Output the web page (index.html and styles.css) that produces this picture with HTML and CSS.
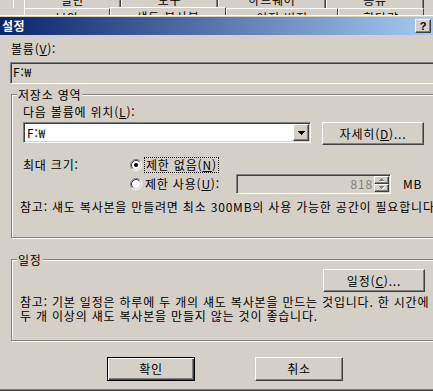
FILE: index.html
```html
<!DOCTYPE html>
<html lang="ko">
<head>
    <meta charset="UTF-8">
    <title>설정</title>
    <link rel="stylesheet" href="styles.css">
</head>
<body>
    <!-- 뒤에 있는 속성 창의 탭 -->
    <div class="backdrop">
        <div class="tabs-top">
            <div class="edge"></div>
            <div class="tab w97"><span>일반</span></div>
            <div class="tab w97"><span>도구</span></div>
            <div class="tab w108"><span>하드웨어</span></div>
            <div class="tab w98"><span>공유</span></div>
        </div>
        <div class="tabs-bottom">
            <div class="tab w86">보안</div>
            <div class="tab w116 active">섀도 복사본</div>
            <div class="tab w112">이전 버전</div>
            <div class="tab w86">할당량</div>
        </div>
    </div>

    <div class="dialog">
        <div class="titlebar">
            <span class="title">설정</span>
            <span class="help raised">?</span>
        </div>

        <div class="client">
            <div class="caption first">볼륨(<u>V</u>):</div>
            <div class="edit sunken volume">F:₩</div>

            <div class="group storage">
                <div class="group-title">저장소 영역</div>
                <div class="caption">다음 볼륨에 위치(<u>L</u>):</div>
                <div class="combo-row">
                    <div class="combo sunken">
                        <span class="combo-text">F:₩</span>
                        <span class="combo-btn raised">
                            <svg width="7" height="4" viewBox="0 0 7 4"><path d="M0 0h7v1h-1v1h-1v1h-1v1h-1v-1h-1v-1h-1v-1H0z" fill="#000"/></svg>
                        </span>
                    </div>
                    <div class="btn raised wide">자세히(<u>D</u>)...</div>
                </div>

                <div class="limit-row first">
                    <div class="limit-label">최대 크기:</div>
                    <div class="radio">
                        <svg width="12" height="12" viewBox="0 0 12 12">
                            <circle cx="6" cy="6" r="4" fill="#fff"/>
                            <path d="M2.11 9.89A5.5 5.5 0 0 1 9.89 2.11" fill="none" stroke="#808080"/>
                            <path d="M9.89 2.11A5.5 5.5 0 0 1 2.11 9.89" fill="none" stroke="#fff"/>
                            <path d="M2.82 9.18A4.5 4.5 0 0 1 9.18 2.82" fill="none" stroke="#404040"/>
                            <path d="M9.18 2.82A4.5 4.5 0 0 1 2.82 9.18" fill="none" stroke="#d4d0c8"/>
                            <circle cx="6" cy="6" r="2" fill="#000"/>
                        </svg>
                        <span class="focus">제한 없음(<u>N</u>)</span>
                    </div>
                </div>
                <div class="limit-row second">
                    <div class="radio">
                        <svg width="12" height="12" viewBox="0 0 12 12">
                            <circle cx="6" cy="6" r="4" fill="#fff"/>
                            <path d="M2.11 9.89A5.5 5.5 0 0 1 9.89 2.11" fill="none" stroke="#808080"/>
                            <path d="M9.89 2.11A5.5 5.5 0 0 1 2.11 9.89" fill="none" stroke="#fff"/>
                            <path d="M2.82 9.18A4.5 4.5 0 0 1 9.18 2.82" fill="none" stroke="#404040"/>
                            <path d="M9.18 2.82A4.5 4.5 0 0 1 2.82 9.18" fill="none" stroke="#d4d0c8"/>
                        </svg>
                        <span>제한 사용(<u>U</u>):</span>
                    </div>
                    <div class="spin-edit sunken">
                        <span class="spin-value">818</span>
                        <span class="spinner">
                            <span class="spin-half raised">
                                <svg width="6" height="4" viewBox="0 0 6 4"><path d="M3 1h1v1h1v1H5v1H1V3h1V2h1z" fill="#fff"/><path d="M2 0h1v1h1v1h1v1H0V2h1V1h1z" fill="#808080"/></svg>
                            </span>
                            <span class="spin-half raised">
                                <svg width="6" height="4" viewBox="0 0 6 4"><path d="M1 1h5v1H5v1H4v1H3V3H2V2H1z" fill="#fff"/><path d="M0 0h5v1H4v1H3v1H2V2H1V1H0z" fill="#808080"/></svg>
                            </span>
                        </span>
                    </div>
                    <div class="unit">MB</div>
                </div>

                <p class="note">참고: 섀도 복사본을 만들려면 최소 300MB의 사용 가능한 공간이 필요합니다.</p>
            </div>

            <div class="group schedule">
                <div class="group-title">일정</div>
                <div class="sched-row">
                    <div class="btn raised wide">일정(<u>C</u>)...</div>
                </div>
                <p class="note">참고: 기본 일정은 하루에 두 개의 섀도 복사본을 만드는 것입니다. 한 시간에<br>두 개 이상의 섀도 복사본을 만들지 않는 것이 좋습니다.</p>
            </div>

            <div class="button-row">
                <div class="btn default">확인</div>
                <div class="btn raised">취소</div>
            </div>
        </div>
    </div>
</body>
</html>
```

FILE: styles.css
```css
* {
    box-sizing: border-box;
}
body {
    margin: 0;
    width: 433px;
    height: 391px;
    overflow: hidden;
    background-color: #d4d0c8;
    font-family: "Noto Sans CJK KR", "Liberation Sans", sans-serif;
    font-size: 12px;
    line-height: 14px;
    letter-spacing: 0.8px;
    color: #000;
}
u {
    text-decoration: underline;
    text-underline-offset: 1px;
}

/* 3D 테두리 */
.raised {
    background-color: #d4d0c8;
    border: 1px solid;
    border-color: #fff #404040 #404040 #fff;
    box-shadow: inset -1px -1px #808080;
}
.sunken {
    border: 1px solid;
    border-color: #808080 #fff #fff #808080;
    box-shadow: inset 1px 1px #404040, inset -1px -1px #d4d0c8;
}

/* 뒤쪽 창 */
.backdrop {
    height: 15px;
    overflow: hidden;
}
.tabs-top {
    display: flex;
    height: 8px;
    padding-left: 13px;
    overflow: hidden;
}
.tabs-top .edge {
    width: 11px;
    border-left: 1px solid #fff;
}
.tabs-top .tab {
    border-left: 1px solid #fff;
    border-right: 1px solid #404040;
    box-shadow: inset -1px 0 #808080;
    text-align: center;
}
.tabs-top .tab span {
    display: block;
    margin-top: -7px;
}
.tabs-bottom {
    display: flex;
    height: 7px;
    padding-left: 24px;
}
.tabs-bottom .tab {
    height: 7px;
    border-top: 1px solid #fff;
    border-left: 1px solid #fff;
    border-right: 1px solid #404040;
    padding-top: 2px;
    text-align: center;
}
.tabs-bottom .tab.active {
    margin-top: -1px;
    height: 9px;
}
.w86 { width: 86px; }
.w97 { width: 97px; }
.w98 { width: 98px; }
.w108 { width: 108px; }
.w112 { width: 112px; }
.w116 { width: 116px; }

/* 대화 상자 */
.dialog {
    border-top: 1px solid #fff;
    padding-top: 1px;
    border-bottom: 1px solid #404040;
}
.titlebar {
    display: flex;
    align-items: center;
    justify-content: space-between;
    height: 18px;
    padding: 0 2px;
    background: linear-gradient(to right, #0a246a, #a6caf0);
}
.title {
    color: #fff;
    font-weight: bold;
    letter-spacing: 0.4px;
}
.help {
    width: 16px;
    height: 14px;
    font-family: "Liberation Sans", sans-serif;
    font-size: 11px;
    font-weight: bold;
    line-height: 12px;
    letter-spacing: 0;
    text-align: center;
}
.client {
    padding: 7px 0 9px 10px;
    box-shadow: inset 0 -1px #808080;
}
.caption.first {
    padding-left: 1px;
}
.volume {
    margin-top: 6px;
    width: 440px;
    height: 22px;
    padding: 2px 2px;
}

.group {
    margin-left: 1px;
    width: 430px;
    border: 1px solid #808080;
    box-shadow: inset 1px 1px #fff, 1px 1px #fff;
    padding: 0 15px 23px 11px;
}
.storage {
    margin-top: 10px;
}
.schedule {
    margin-top: 21px;
    padding-bottom: 17px;
}
.group-title {
    width: fit-content;
    margin: -7px 0 0 -6px;
    padding: 0 1px;
    background-color: #d4d0c8;
}
.storage .caption {
    margin-top: 3px;
}

.combo-row {
    display: flex;
    align-items: flex-start;
    gap: 11px;
    margin-top: 3px;
}
.combo {
    display: flex;
    align-items: center;
    width: 288px;
    height: 21px;
    padding: 1px;
    background-color: #fff;
}
.combo-text {
    padding-left: 2px;
}
.combo-btn {
    display: flex;
    align-items: center;
    justify-content: center;
    margin-left: auto;
    width: 16px;
    height: 17px;
}
.btn {
    display: flex;
    align-items: center;
    justify-content: center;
    height: 23px;
}
.btn.wide {
    width: 102px;
}

.limit-row {
    display: flex;
    align-items: center;
}
.limit-row.first {
    margin-top: 12px;
    height: 15px;
}
.limit-row.second {
    margin-top: 2px;
    height: 20px;
    padding-left: 107px;
}
.limit-label {
    width: 107px;
}
.radio {
    display: flex;
    align-items: center;
    gap: 3px;
}
.radio svg {
    flex: none;
}
.second .radio {
    width: 106px;
}
.focus {
    outline: 1px dotted #000;
    padding: 0 1px;
}
.spin-edit {
    display: flex;
    align-items: center;
    width: 155px;
    height: 20px;
    padding: 1px;
}
.spin-value {
    flex: 1;
    text-align: right;
    padding-right: 1px;
    color: #808080;
}
.spinner {
    display: flex;
    flex-direction: column;
    width: 15px;
    height: 16px;
}
.spin-half {
    display: flex;
    align-items: center;
    justify-content: center;
    height: 8px;
}
.unit {
    margin-left: 12px;
}

.note {
    margin: 6px 0 0 -3px;
    white-space: nowrap;
}
.schedule .note {
    margin-top: 3px;
}
.sched-row {
    display: flex;
    justify-content: flex-end;
    margin-top: 2px;
}

.button-row {
    display: flex;
    gap: 60px;
    margin-top: 16px;
    padding-left: 97px;
}
.button-row .btn {
    width: 88px;
    height: 24px;
}
.btn.default {
    border: 1px solid #000;
    box-shadow: inset 1px 1px #fff, inset -1px -1px #404040, inset -2px -2px #808080;
}
```
